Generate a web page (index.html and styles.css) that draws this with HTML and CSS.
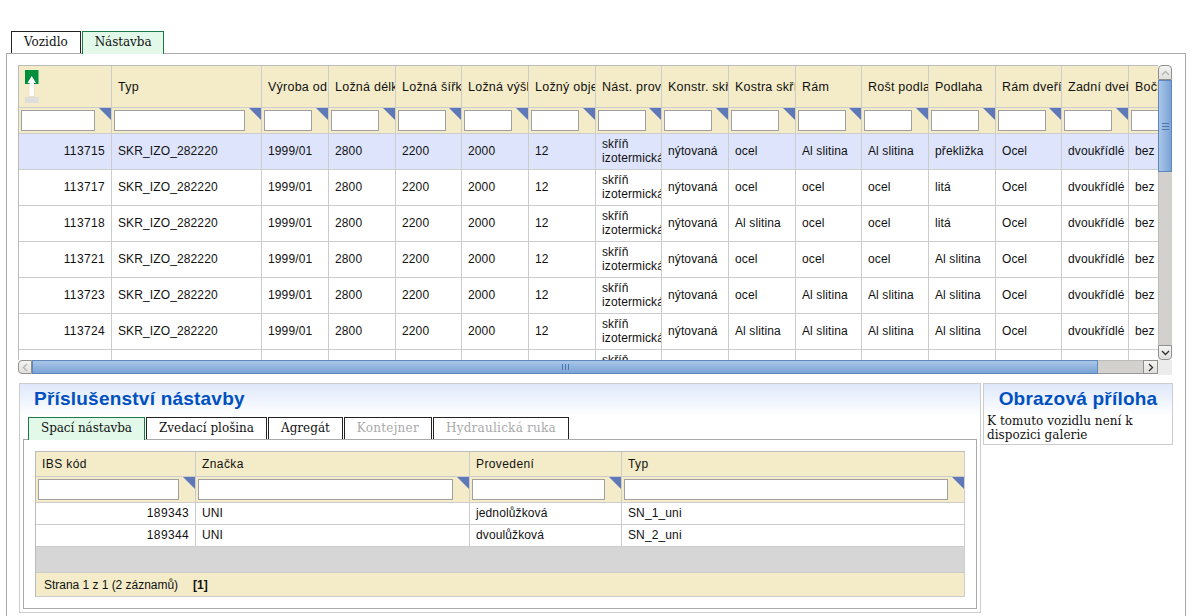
FILE: index.html
```html
<!DOCTYPE html>
<html lang="cs">
<head>
<meta charset="utf-8">
<title>Nástavba</title>
<link rel="stylesheet" href="styles.css">
</head>
<body>
<div class="tabs outer-tabs">
  <div class="tab">Vozidlo</div>
  <div class="tab active">Nástavba</div>
</div>
<div class="panel">
  <div class="grid-wrap">
    <div class="grid-clip">
      <table class="grid main">
        <colgroup>
          <col class="c0"><col class="c1"><col class="cn"><col class="cn"><col class="cm"><col class="cn"><col class="cn"><col class="cm"><col class="cn"><col class="cn"><col class="cm"><col class="cn"><col class="cn"><col class="cm"><col class="cn"><col class="cn">
        </colgroup>
        <thead>
          <tr class="head">
            <th class="ico"><svg class="sort" width="14" height="33" viewBox="0 0 14 33"><rect x="0" y="0" width="13.5" height="14" fill="#008f3c"/><rect x="0" y="27" width="13.5" height="6" fill="#dedede"/><rect x="3.5" y="14" width="6.5" height="13" fill="#f6dcc8"/><path d="M6.7 6 L11 13 H9 V26 H4.5 V13 H2.4 Z" fill="#fff"/></svg></th>
            <th>Typ</th><th>Výroba od</th><th>Ložná délka</th><th>Ložná šířka</th><th>Ložná výška</th><th>Ložný objem</th><th>Nást. provedení</th><th>Konstr. skříně</th><th>Kostra skříně</th><th>Rám</th><th>Rošt podlahy</th><th>Podlaha</th><th>Rám dveří</th><th>Zadní dveře</th><th>Boční dveře</th>
          </tr>
          <tr class="filter">
            <td><input class="f i74"><i class="tri"></i></td><td><input class="f i131"><i class="tri"></i></td>
            <td><input class="f"><i class="tri"></i></td><td><input class="f"><i class="tri"></i></td><td><input class="f"><i class="tri"></i></td><td><input class="f"><i class="tri"></i></td><td><input class="f"><i class="tri"></i></td><td><input class="f"><i class="tri"></i></td><td><input class="f"><i class="tri"></i></td><td><input class="f"><i class="tri"></i></td><td><input class="f"><i class="tri"></i></td><td><input class="f"><i class="tri"></i></td><td><input class="f"><i class="tri"></i></td><td><input class="f"><i class="tri"></i></td><td><input class="f"><i class="tri"></i></td><td><input class="f"><i class="tri"></i></td>
          </tr>
        </thead>
        <tbody>
          <tr class="row sel"><td class="num">113715</td><td>SKR_IZO_282220</td><td>1999/01</td><td>2800</td><td>2200</td><td>2000</td><td>12</td><td class="wrap">skříň izotermická</td><td>nýtovaná</td><td>ocel</td><td>Al slitina</td><td>Al slitina</td><td>překližka</td><td>Ocel</td><td>dvoukřídlé</td><td>bez</td></tr>
          <tr class="row"><td class="num">113717</td><td>SKR_IZO_282220</td><td>1999/01</td><td>2800</td><td>2200</td><td>2000</td><td>12</td><td class="wrap">skříň izotermická</td><td>nýtovaná</td><td>ocel</td><td>ocel</td><td>ocel</td><td>litá</td><td>Ocel</td><td>dvoukřídlé</td><td>bez</td></tr>
          <tr class="row"><td class="num">113718</td><td>SKR_IZO_282220</td><td>1999/01</td><td>2800</td><td>2200</td><td>2000</td><td>12</td><td class="wrap">skříň izotermická</td><td>nýtovaná</td><td>Al slitina</td><td>ocel</td><td>ocel</td><td>litá</td><td>Ocel</td><td>dvoukřídlé</td><td>bez</td></tr>
          <tr class="row"><td class="num">113721</td><td>SKR_IZO_282220</td><td>1999/01</td><td>2800</td><td>2200</td><td>2000</td><td>12</td><td class="wrap">skříň izotermická</td><td>nýtovaná</td><td>ocel</td><td>ocel</td><td>ocel</td><td>Al slitina</td><td>Ocel</td><td>dvoukřídlé</td><td>bez</td></tr>
          <tr class="row"><td class="num">113723</td><td>SKR_IZO_282220</td><td>1999/01</td><td>2800</td><td>2200</td><td>2000</td><td>12</td><td class="wrap">skříň izotermická</td><td>nýtovaná</td><td>ocel</td><td>Al slitina</td><td>Al slitina</td><td>Al slitina</td><td>Ocel</td><td>dvoukřídlé</td><td>bez</td></tr>
          <tr class="row"><td class="num">113724</td><td>SKR_IZO_282220</td><td>1999/01</td><td>2800</td><td>2200</td><td>2000</td><td>12</td><td class="wrap">skříň izotermická</td><td>nýtovaná</td><td>Al slitina</td><td>Al slitina</td><td>Al slitina</td><td>Al slitina</td><td>Ocel</td><td>dvoukřídlé</td><td>bez</td></tr>
          <tr class="row"><td class="num">113725</td><td>SKR_IZO_282220</td><td>1999/01</td><td>2800</td><td>2200</td><td>2000</td><td>12</td><td class="wrap">skříň izotermická</td><td>nýtovaná</td><td>ocel</td><td>ocel</td><td>ocel</td><td>litá</td><td>Ocel</td><td>dvoukřídlé</td><td>bez</td></tr>
        </tbody>
      </table>
    </div>
    <div class="vbar">
      <div class="btn btn-v top"><svg width="9" height="6" viewBox="0 0 9 6"><path d="M1 5 L4.5 1.5 L8 5" fill="none" stroke="#b4b4b4" stroke-width="1.4"/></svg></div>
      <div class="vthumb"><span class="grip-v"></span></div>
      <div class="vtrack"></div>
      <div class="btn btn-v bottom"><svg width="9" height="6" viewBox="0 0 9 6"><path d="M1 1 L4.5 4.5 L8 1" fill="none" stroke="#333" stroke-width="1.4"/></svg></div>
    </div>
    <div class="hbar">
      <div class="btn btn-h left"><svg width="6" height="9" viewBox="0 0 6 9"><path d="M5 1 L1.5 4.5 L5 8" fill="none" stroke="#b4b4b4" stroke-width="1.4"/></svg></div>
      <div class="hthumb"><span class="grip-h"></span></div>
      <div class="htrack"></div>
      <div class="btn btn-h right"><svg width="6" height="9" viewBox="0 0 6 9"><path d="M1 1 L4.5 4.5 L1 8" fill="none" stroke="#333" stroke-width="1.4"/></svg></div>
    </div>
    <div class="corner"></div>
  </div>
  <div class="lower">
    <section class="acc">
      <h2 class="title">Příslušenství nástavby</h2>
      <div class="tabs inner-tabs">
        <div class="tab active">Spací nástavba</div>
        <div class="tab">Zvedací plošina</div>
        <div class="tab">Agregát</div>
        <div class="tab off">Kontejner</div>
        <div class="tab off">Hydraulická ruka</div>
      </div>
      <div class="inner">
        <table class="grid sub">
          <colgroup><col class="s0"><col class="s1"><col class="s2"><col class="s3"></colgroup>
          <thead>
            <tr class="shead"><th>IBS kód</th><th>Značka</th><th>Provedení</th><th>Typ</th></tr>
            <tr class="sfilter">
              <td><input class="f i141"><i class="tri"></i></td>
              <td><input class="f i255"><i class="tri"></i></td>
              <td><input class="f i133"><i class="tri"></i></td>
              <td><input class="f i324"><i class="tri"></i></td>
            </tr>
          </thead>
          <tbody>
            <tr class="srow"><td class="num">189343</td><td>UNI</td><td>jednolůžková</td><td>SN_1_uni</td></tr>
            <tr class="srow"><td class="num">189344</td><td>UNI</td><td>dvoulůžková</td><td>SN_2_uni</td></tr>
            <tr class="blank"><td colspan="4"></td></tr>
            <tr class="pager"><td colspan="4"><span class="count">Strana 1 z 1 (2 záznamů)</span><b>[1]</b></td></tr>
          </tbody>
        </table>
      </div>
    </section>
    <aside class="gallery">
      <h2 class="title center">Obrazová příloha</h2>
      <p class="note">K tomuto vozidlu není k dispozici galerie</p>
    </aside>
  </div>
</div>
</body>
</html>
```

FILE: styles.css
```css
* { box-sizing: border-box; }
html, body { margin: 0; padding: 0; height: 616px; overflow: hidden; background: #fff; }
body { padding-top: 31px; font-family: "Liberation Sans", Arial, sans-serif; font-size: 12px; color: #111; }

.tabs { display: flex; align-items: flex-start; position: relative; z-index: 1; }
.outer-tabs { padding-left: 11px; gap: 1px; height: 22px; }
.tab { height: 22px; padding: 0 12px; border: 1px solid #222; border-bottom: 0; background: #fff;
  font-family: "DejaVu Serif", serif; font-size: 12px; line-height: 20px; color: #111; white-space: nowrap; }
.tab.active { height: 23px; background: #e2f9ea; border-color: #1c7a48; letter-spacing: -.08px; }
.tab.off { color: #aaa; letter-spacing: .25px; }

.panel { margin-left: 6px; width: 1180px; height: 600px; border: 1px solid #aaa; padding: 11px 12px 0 11px; background: #fff; }

.grid-wrap { display: grid; grid-template-columns: 1140px 14px; grid-template-rows: 295px 15px; width: 1154px; }
.grid-clip { overflow: hidden; border-top: 1px solid #bbb; border-left: 1px solid #bbb; }

.grid { border-collapse: separate; border-spacing: 0; table-layout: fixed; letter-spacing: .12px; }
.grid td, .grid th { padding: 0 0 0 6px; overflow: hidden; white-space: nowrap; font-weight: normal; text-align: left;
  border-right: 1px solid #ccc; border-bottom: 1px solid #ccc; position: relative; }
.main { width: 1177px; min-width: 1177px; }
.c0 { width: 93px; } .c1 { width: 150px; } .cn { width: 67px; } .cm { width: 66px; }

.head th { height: 42px; background: #f4ecc8; font-size: 12.5px; letter-spacing: .24px; }
.head th.ico { padding: 0; }
.sort { position: absolute; left: 6px; top: 4px; display: block; }
.filter td { height: 26px; background: #f4ecc8; padding: 0 0 0 2px; }
.f { display: block; width: 48px; height: 21px; border: 1px solid #a0a0a0; background: #fff; padding: 0; margin: 0; border-radius: 0; outline: 0; }
.i74 { width: 74px; } .i131 { width: 131px; } .i141 { width: 141px; } .i255 { width: 255px; } .i133 { width: 133px; } .i324 { width: 324px; }
.tri { position: absolute; top: 0; right: 0; width: 12px; height: 12px; background: #5f78b8; clip-path: polygon(0 0, 100% 0, 100% 100%); }

.grid .row td { height: 36px; background: #fff; line-height: 14px; padding-bottom: 2px; }
.grid .row.sel td { background: #dde4fb; }
.grid td.num { text-align: right; padding-right: 6px; letter-spacing: .35px; }
.grid td.wrap { white-space: normal; }

.vbar { display: flex; flex-direction: column; width: 14px; height: 295px; }
.hbar { display: flex; height: 15px; width: 1140px; }
.corner { background: #ececec; }
.btn { display: flex; align-items: center; justify-content: center; flex: none; background: linear-gradient(#f4f4f2, #e0dfdc); border: 1px solid #8f8f8f; }
.btn-v { height: 15px; width: 14px; }
.btn-v.top { border-radius: 4px 4px 0 0; }
.btn-v.bottom { border-radius: 0 0 4px 4px; }
.btn-h { width: 15px; height: 14px; }
.btn-h.left { width: 14px; border-radius: 4px 0 0 4px; }
.vthumb { height: 92px; flex: none; border: 1px solid #5f86bd; background: linear-gradient(90deg, #a9c6e8, #7ba3d6); display: flex; align-items: center; justify-content: center; }
.hthumb { width: 1066px; flex: none; height: 14px; border: 1px solid #5f86bd; background: linear-gradient(#a9c6e8, #7ba3d6); display: flex; align-items: center; justify-content: center; }
.grip-v { width: 7px; height: 7px; background: repeating-linear-gradient(#4d76ad 0, #4d76ad 1px, transparent 1px, transparent 3px); }
.grip-h { width: 7px; height: 6px; background: repeating-linear-gradient(90deg, #4d76ad 0, #4d76ad 1px, transparent 1px, transparent 3px); }
.vtrack { flex: 1; background: #d2d1cd; border-left: 1px solid #bbb; }
.htrack { flex: 1; height: 14px; background: #d2d1cd; border-top: 1px solid #bbb; border-bottom: 1px solid #999; }

.lower { display: flex; align-items: flex-start; margin-top: 8px; margin-left: 1px; gap: 2px; }
.acc { width: 962px; height: 230px; border: 1px solid #ccc; padding: 0 4px 0 4px; background: linear-gradient(#dfe8fb, #fff 32px); }
.gallery { width: 190px; height: 62px; border: 1px solid #ccc; background: linear-gradient(#dfe8fb, #fff 32px); }
.title { margin: 0; height: 29px; padding: 3px 0 0 10px; font-size: 19px; line-height: 24px; font-weight: bold; color: #0050c0; letter-spacing: .22px; white-space: nowrap; }
.title.center { padding-left: 0; text-align: center; }
.note { margin: 0; padding: 1px 3px 0; font-family: "DejaVu Serif", serif; font-size: 12px; line-height: 14px; letter-spacing: .05px; color: #111; }

.inner-tabs { gap: 1px; margin-top: 4px; height: 22px; padding-left: 4px; }
.inner { height: 170px; width: 954px; margin-left: -1px; border: 1px solid #aaa; padding: 11px 0 0 11px; background: #fff; }

.sub { width: 930px; border-top: 1px solid #bbb; border-left: 1px solid #bbb; }
.s0 { width: 160px; } .s1 { width: 274px; } .s2 { width: 152px; } .s3 { width: 343px; }
.shead th { height: 25px; background: #f4ecc8; font-size: 12px; letter-spacing: .4px; }
.sfilter td { height: 26px; background: #f4ecc8; padding: 0 0 0 2px; }
.grid .srow td { height: 22px; background: #fff; padding-bottom: 2px; }
.blank td { height: 26px; background: #d6d6d6; }
.pager td { height: 24px; background: #f4ecc8; padding-left: 8px; letter-spacing: -.03px; }
.count { margin-right: 15px; }
.pager b { font-weight: bold; }
```
